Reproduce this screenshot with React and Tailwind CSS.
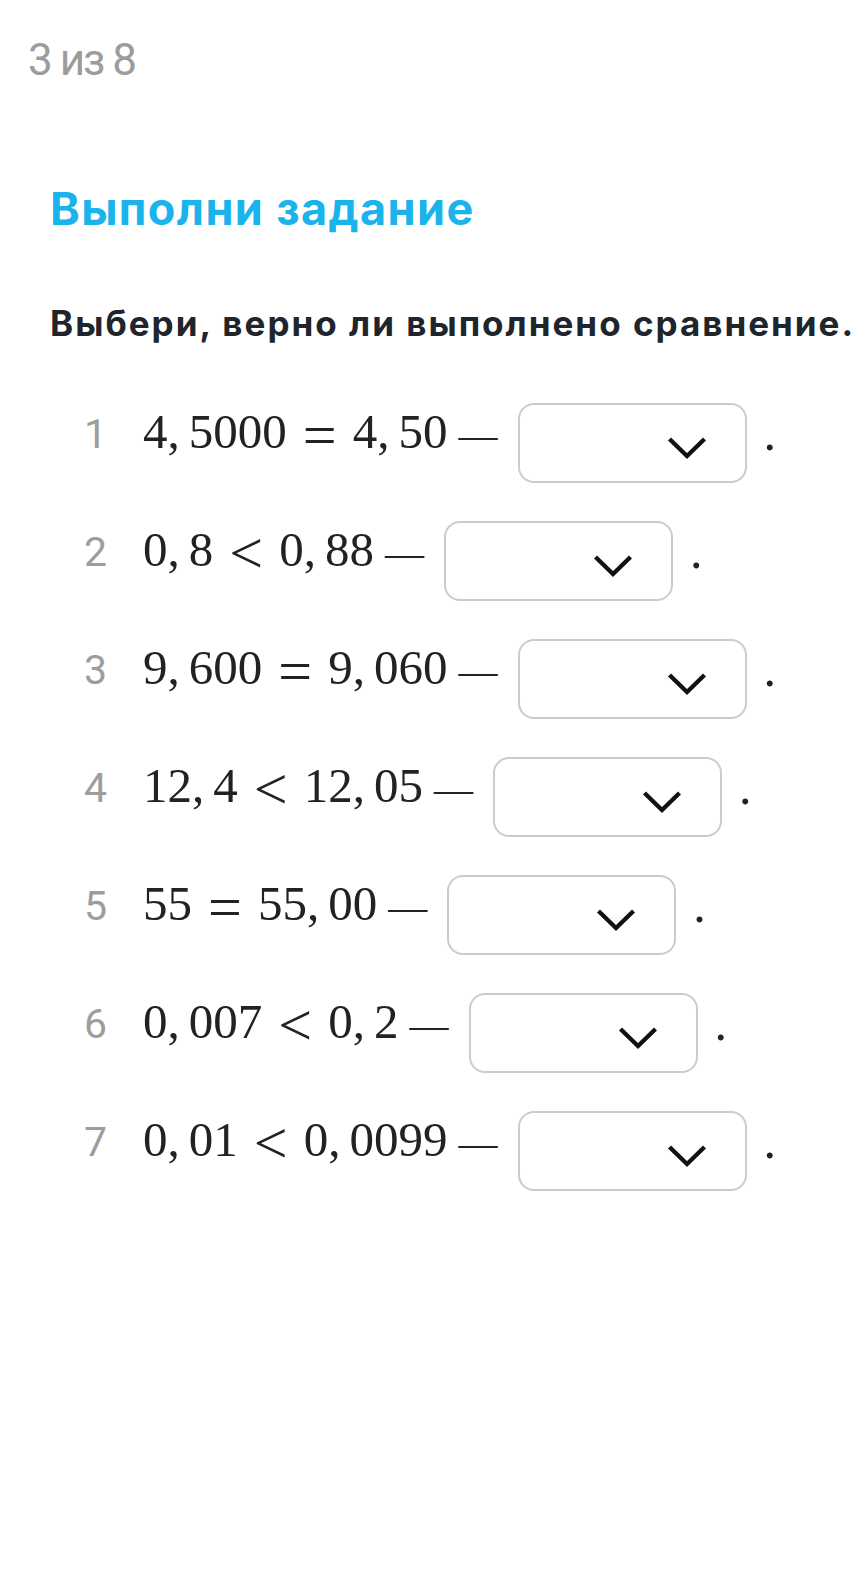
import React from "react";

function MathExpr({ s }) {
  const tokens = [];
  let buf = "";
  const flush = () => {
    if (buf) {
      tokens.push({ t: "num", v: buf });
      buf = "";
    }
  };
  for (const ch of s) {
    if (/[0-9]/.test(ch)) buf += ch;
    else {
      flush();
      tokens.push({ t: ch === "," ? "comma" : "rel", v: ch });
    }
  }
  flush();
  return (
    <span className="whitespace-nowrap">
      {tokens.map((tk, i) => {
        if (tk.t === "num") return <span key={i}>{tk.v}</span>;
        if (tk.t === "comma")
          return (
            <span key={i} className="mr-[9px]">
              ,
            </span>
          );
        return (
          <span
            key={i}
            className="mx-[14px] inline-block w-[38px] text-center text-[60px] leading-[30px] align-[-7px]"
          >
            {tk.v}
          </span>
        );
      })}
    </span>
  );
}

function Chevron() {
  return (
    <svg width="40" height="23" viewBox="0 0 40 23" className="mt-2">
      <path d="M2.5 3 L20 20 L37.5 3" fill="none" stroke="#111" strokeWidth="4.3" strokeLinejoin="miter" />
    </svg>
  );
}

function Row({ n, expr }) {
  return (
    <div className="flex items-center h-[80px] pl-[50px]">
      <div className="flex items-baseline mb-6 leading-none">
        <span className="w-[56px] text-right font-['Roboto',sans-serif] text-[41px] tracking-[-1px] text-[#9d9d9d]">{n}</span>
        <span className="ml-[37px] font-['Liberation_Serif',serif] text-[49px] leading-none text-[#222]">
          <MathExpr s={expr} />
        </span>
        <span className="ml-[11px] font-['Liberation_Serif',serif] text-[39px] text-[#222]">—</span>
      </div>
      <div className="ml-[20px] w-[229px] h-[80px] shrink-0 rounded-[16px] border-2 border-[#cbcbcb] flex items-center justify-end pr-[38px]">
        <Chevron />
      </div>
      <span className="ml-[17px] mb-5 leading-none font-['Liberation_Serif',serif] text-[50px] text-[#222]">.</span>
    </div>
  );
}

export default function App() {
  const rows = [
    "4,5000=4,50",
    "0,8<0,88",
    "9,600=9,060",
    "12,4<12,05",
    "55=55,00",
    "0,007<0,2",
    "0,01<0,0099",
  ];
  return (
    <div className="min-h-[1572px] w-full bg-white overflow-hidden">
      <div className="pl-[28px] pt-[38px] text-[44px] leading-none tracking-[-2px] text-[#9c9c9c] font-['Roboto',sans-serif]">
        3 из 8
      </div>
      <h1 className="mt-[104px] pl-[50px] text-[45px] leading-none font-bold tracking-[1.4px] text-[#1bb3eb] font-['Inter',sans-serif]">
        Выполни задание
      </h1>
      <p className="mt-[75px] pl-[50px] whitespace-nowrap text-[35px] leading-none font-bold tracking-[2px] text-[#1f252d] font-['Inter',sans-serif]">
        Выбери, верно ли выполнено сравнение.
      </p>
      <div className="mt-[62px] flex flex-col gap-[38px]">
        {rows.map((r, i) => (
          <Row key={i} n={i + 1} expr={r} />
        ))}
      </div>
    </div>
  );
}
